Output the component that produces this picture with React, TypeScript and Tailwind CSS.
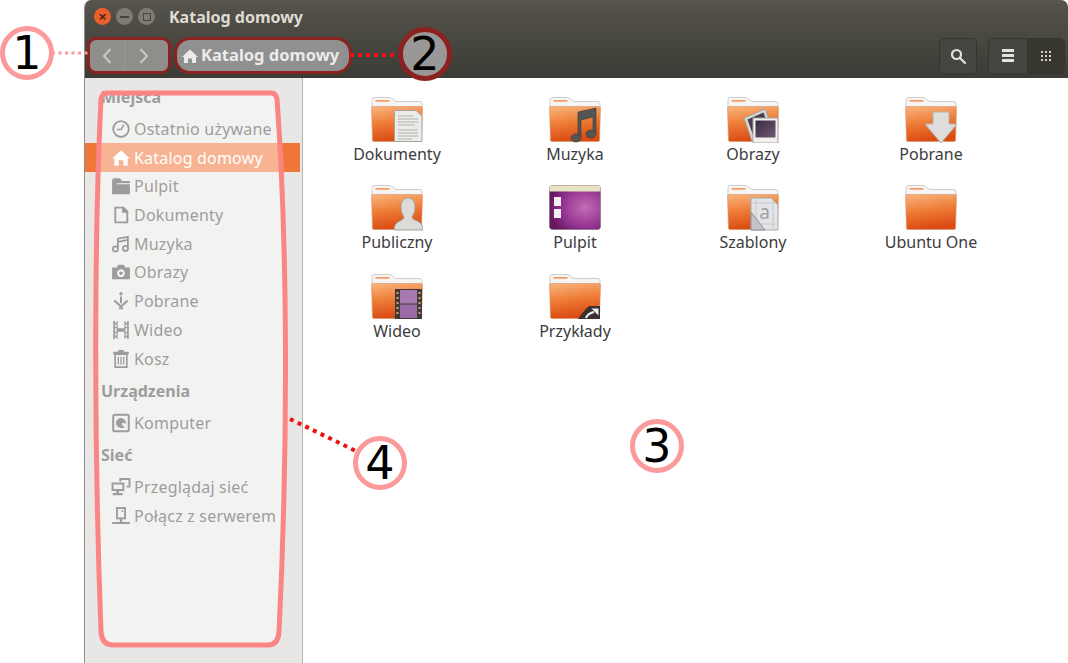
import type { ReactNode } from "react";

const uiFont = "font-['Noto_Sans',sans-serif]";

const FolderDefs = () => (
  <svg width="0" height="0" className="absolute">
    <defs>
      <linearGradient id="folderFront" x1="0" y1="0" x2="0.2" y2="1">
        <stop offset="0" stopColor="#f9b67f" />
        <stop offset="0.5" stopColor="#ee7d38" />
        <stop offset="1" stopColor="#db4c12" />
      </linearGradient>
      <radialGradient id="desktopFill" cx="0.7" cy="0.5" r="0.7">
        <stop offset="0" stopColor="#c56cb4" />
        <stop offset="0.7" stopColor="#8e2f8c" />
        <stop offset="1" stopColor="#66185f" />
      </radialGradient>
      <linearGradient id="photoFill" x1="0" y1="0" x2="1" y2="1">
        <stop offset="0" stopColor="#3d2a45" />
        <stop offset="1" stopColor="#6d5a70" />
      </linearGradient>
    </defs>
  </svg>
);

// Emblems are drawn in the same 52x46 box as the folder
const emblems: Record<string, ReactNode> = {
  docs: (
    <g>
      <path d="M23.500 13.500H45L51 19V44.500H23.500Z" fill="#ecebe8" stroke="#a8a7a3" />
      <path d="M27 19H42M27 22H47M27 25H47M27 28H44M27 33H47M27 36H47M27 39H47M27 42H41" stroke="#a3a29f" strokeWidth="0.8" />
    </g>
  ),
  music: (
    <g fill="#555553" stroke="#3b3b3a" strokeWidth="0.6">
      <path d="M29 15L47 11V36H44V20L32 23V41H29Z" />
      <ellipse cx="27" cy="41" rx="5" ry="4" />
      <ellipse cx="42" cy="37" rx="5" ry="4" />
    </g>
  ),
  photos: (
    <g>
      <path d="M17 21L38 12L45 30L25 44Z" fill="#d9d8d5" stroke="#a5a4a0" />
      <path d="M20.500 22.500L36.500 15.500L41 28L26 38Z" fill="#4b3a50" />
      <rect x="26" y="21" width="25" height="25" fill="#f1f0ee" stroke="#a5a4a0" />
      <rect x="28.500" y="23.500" width="20" height="17" fill="url(#photoFill)" />
    </g>
  ),
  download: (
    <path d="M28 15H44V27H52L36 46L20 27H28Z" fill="#dedddb" stroke="#b5b4b0" />
  ),
  person: (
    <path
      d="M37 13C42 13 44 17 44 22C44 27 42 30 41 32C41 34 44 35 48 37C51 39 52 42 52 45H23C23 42 24 39 27 37C31 35 33 34 33 32C32 30 30 27 30 22C30 17 32 13 37 13Z"
      fill="#dcdbd8"
      stroke="#a5a4a0"
    />
  ),
  templates: (
    <g>
      <path d="M24 13H44L51 20V45H24Z" fill="#e3e4e6" stroke="#aaabae" />
      <path d="M26 18H49M26 39H49M29 14V44M46 14V44" stroke="#bcbdc2" strokeWidth="0.7" />
      <text x="37.500" y="34" textAnchor="middle" fontSize="19" fill="#9fa0a6" fontFamily="Noto Sans, sans-serif">a</text>
      <path d="M24 27L38 45H24Z" fill="#c3c4c8" stroke="#8f9095" />
    </g>
  ),
  video: (
    <g>
      <rect x="24" y="15" width="27" height="30" fill="#3f3a38" />
      <rect x="29" y="16" width="17" height="13.500" fill="#a87bb0" />
      <rect x="29" y="30.500" width="17" height="13.500" fill="#9a6ba4" />
      <path d="M25.500 18h2v2h-2zM25.500 23h2v2h-2zM25.500 28h2v2h-2zM25.500 33h2v2h-2zM25.500 38h2v2h-2zM47.500 18h2v2h-2zM47.500 23h2v2h-2zM47.500 28h2v2h-2zM47.500 33h2v2h-2zM47.500 38h2v2h-2z" fill="#d8a36e" />
    </g>
  ),
  link: (
    <g>
      <path d="M40 32H51V45H29C32 41 35 36 40 32Z" fill="#3a3230" />
      <path d="M37 44C38 41 41 39 45 38" fill="none" stroke="#f1f0ee" strokeWidth="2.200" />
      <path d="M42.500 34.500H49.500V41.500Z" fill="#f1f0ee" />
    </g>
  ),
};

const FolderIcon = ({ emblem }: { emblem?: string }) => (
  <svg width="52" height="46" viewBox="0 0 52 46" className="block">
    <path d="M1 9V2.500Q1 .5 3 .5H19L25 4.500H49Q51 4.500 51 6.500V12H1Z" fill="#f6f5f3" stroke="#cfcecb" />
    <rect x="4.500" y="3" width="14" height="1.700" fill="#f59a63" />
    <path d="M.5 11Q.5 9.500 2 9.500H50Q51.500 9.500 51.500 11L50.500 43Q50.500 44.500 49 44.500H3Q1.500 44.500 1.500 43Z" fill="url(#folderFront)" stroke="#d9916a" strokeWidth="0.6" />
    {emblem && emblems[emblem]}
  </svg>
);

const DesktopIcon = () => (
  <svg width="52" height="46" viewBox="0 0 52 46" className="block">
    <rect x="0.500" y="0.500" width="51" height="44" rx="3" fill="url(#desktopFill)" stroke="#7d6a78" strokeWidth="0.6" />
    <path d="M.5 6.500V3.500Q.5 .5 3.500 .5H48.500Q51.500 .5 51.500 3.500V6.500Z" fill="#e7e4c3" />
    <rect x="5" y="12" width="7" height="9" fill="#f3eef2" />
    <rect x="5" y="24" width="7" height="9" fill="#f3eef2" />
  </svg>
);

// Sidebar glyphs, 18 unit viewBox drawn at 20px
const SideGlyph = ({ children }: { children: ReactNode }) => (
  <svg width="20" height="20" viewBox="0 0 18 18" className="shrink-0" fill="currentColor">
    {children}
  </svg>
);

const sideIcons: Record<string, ReactNode> = {
  clock: (
    <>
      <circle cx="9" cy="9" r="7" fill="none" stroke="currentColor" strokeWidth="1.600" />
      <path d="M5.500 9.500H9.200L11.500 5" fill="none" stroke="currentColor" strokeWidth="1.400" />
    </>
  ),
  home: <path d="M9 2L17 9.500H15V16H11V11H7V16H3V9.500H1Z" />,
  folder: <path d="M1 4Q1 2 3 2H8L10 4.500H17V6.500H5V7.500H17V16.500H1Z" />,
  file: <path d="M3 1.500H11.500L15.500 5.500V16.500H3ZM4.700 3.200V14.800H13.800V7H10V3.200Z" fillRule="evenodd" />,
  music: (
    <g fill="none" stroke="currentColor" strokeWidth="1.600">
      <circle cx="4" cy="13.500" r="2.300" />
      <circle cx="13" cy="13" r="2.300" />
      <path d="M6.200 13.500V4.200L15.200 2.500V13M6.200 7L15.200 5.300" />
    </g>
  ),
  camera: (
    <path d="M1 5H5L6.500 2.500H11.500L13 5H17V15.500H1ZM9 6.500a3.600 3.600 0 1 0 .01 0ZM9 8.500a1.600 1.600 0 1 1-.01 0Z" fillRule="evenodd" />
  ),
  download: (
    <>
      <circle cx="9" cy="2.500" r="1.500" />
      <rect x="8.100" y="5" width="1.800" height="6" />
      <path d="M3 8.500L9 14L15 8.500" fill="none" stroke="currentColor" strokeWidth="1.800" />
      <rect x="7" y="14.800" width="4" height="1.600" />
    </>
  ),
  film: (
    <path d="M2 1H3.500V2.500H5V1H6V7.500H12V1H13V2.500H14.500V1H16V17H14.500V15.500H13V17H12V10.500H6V17H5V15.500H3.500V17H2ZM3.500 4V6H5V4ZM3.500 7.500V10.500H5V7.500ZM3.500 12V14H5V12ZM13 4V6H14.500V4ZM13 7.500V10.500H14.500V7.500ZM13 12V14H14.500V12Z" fillRule="evenodd" />
  ),
  trash: (
    <path d="M2 2.500H6.500V1H11.500V2.500H16V5H15V17H3V5H2ZM4.500 5.500V15.500H13.500V5.500ZM6 7H7.200V14H6ZM8.400 7H9.600V14H8.400ZM10.800 7H12V14H10.800Z" fillRule="evenodd" />
  ),
  computer: (
    <>
      <rect x="2" y="1.500" width="14" height="15" rx="1.500" fill="none" stroke="currentColor" strokeWidth="1.800" />
      <path d="M9 4.500A4.500 4.500 0 0 1 13.300 10L10.500 8.500L9.500 10L12.500 13.500H9A4.500 4.500 0 0 1 9 4.500Z" />
    </>
  ),
  network: (
    <path d="M7.500 1H17.500V9.500H14V7.800H15.800V2.700H9.200V4H7.500ZM.5 5H12V12.500H7.200V14.300H10.500V16.500H1.500V14.300H4.800V12.500H.5ZM2.200 6.700V10.800H10.300V6.700Z" fillRule="evenodd" />
  ),
  server: (
    <path d="M4.500 1H13.500V12H10V14.500H17V16.300H1V14.500H8V12H4.500ZM6.200 2.700V10.300H11.800V2.700ZM9.500 3.800H11V5.300H9.500Z" fillRule="evenodd" />
  ),
};

const SideHeading = ({ label }: { label: string }) => (
  <div className="flex h-[35.7px] items-center pl-[16px] text-[16px] font-bold text-[#4c4c4c]">
    {label}
  </div>
);

const SideRow = ({ icon, label, active }: { icon: string; label: string; active?: boolean }) => (
  <div
    className={`flex h-[28.7px] items-center gap-[3px] pl-[26px] text-[16px] tracking-[0.2px] ${
      active ? "bg-[#f0763a] text-white" : "text-[#4c4c4c]"
    }`}
  >
    <SideGlyph>{sideIcons[icon]}</SideGlyph>
    <span className="whitespace-nowrap">{label}</span>
  </div>
);

const places = [
  { icon: "clock", label: "Ostatnio używane" },
  { icon: "home", label: "Katalog domowy", active: true },
  { icon: "folder", label: "Pulpit" },
  { icon: "file", label: "Dokumenty" },
  { icon: "music", label: "Muzyka" },
  { icon: "camera", label: "Obrazy" },
  { icon: "download", label: "Pobrane" },
  { icon: "film", label: "Wideo" },
  { icon: "trash", label: "Kosz" },
];

const files = [
  { label: "Dokumenty", emblem: "docs" },
  { label: "Muzyka", emblem: "music" },
  { label: "Obrazy", emblem: "photos" },
  { label: "Pobrane", emblem: "download" },
  { label: "Publiczny", emblem: "person" },
  { label: "Pulpit", desktop: true },
  { label: "Szablony", emblem: "templates" },
  { label: "Ubuntu One" },
  { label: "Wideo", emblem: "video" },
  { label: "Przykłady", emblem: "link" },
];

const Callout = ({ n, className }: { n: number; className: string }) => (
  <div
    className={`absolute flex h-[54px] w-[54px] items-center justify-center rounded-full border-[5px] font-['DejaVu_Sans',sans-serif] text-[46px] leading-none text-black ${className}`}
  >
    {n}
  </div>
);

export default function App() {
  return (
    <div className={`relative flex h-[663px] w-[1068px] overflow-hidden bg-white pl-[84px] ${uiFont}`}>
      <FolderDefs />
      <div className="flex h-full w-full flex-col overflow-hidden rounded-t-[7px] border-l border-[#8f8e8b]">
        {/* title bar */}
        <div className="flex h-[33px] shrink-0 items-center bg-gradient-to-b from-[#56544c] to-[#4a4942] pl-[9px]">
          <div className="flex h-[17px] w-[17px] items-center justify-center rounded-full bg-[#e9602c] text-[15px] font-bold leading-none text-[#5c2410]">
            ×
          </div>
          <div className="ml-[5px] flex h-[17px] w-[17px] items-center justify-center rounded-full bg-[#7d7b72]">
            <div className="h-[2px] w-[9px] bg-[#45443e]" />
          </div>
          <div className="ml-[5px] flex h-[17px] w-[17px] items-center justify-center rounded-full bg-[#7d7b72]">
            <div className="h-[8px] w-[8px] border border-[#45443e]" />
          </div>
          <div className="ml-[14px] text-[16px] font-bold text-[#dfdbd2]">Katalog domowy</div>
        </div>

        {/* toolbar */}
        <div className="flex h-[45px] shrink-0 items-center bg-gradient-to-b from-[#4a4942] to-[#3c3b35] pl-[2px] pr-[3px]">
          <div className="flex h-[37px] w-[84px] rounded-[9px] border-[3px] border-[#8c2220] bg-[#8f8e8b]">
            <div className="flex w-[35px] items-center justify-center border-r border-[#9a9996]">
              <svg width="12" height="18" viewBox="0 0 12 18" fill="none" stroke="#c9c8c5" strokeWidth="2">
                <path d="M9.500 2L3 9L9.500 16" />
              </svg>
            </div>
            <div className="flex flex-1 items-center justify-center pr-[5px]">
              <svg width="12" height="18" viewBox="0 0 12 18" fill="none" stroke="#c9c8c5" strokeWidth="2">
                <path d="M2.500 2L9 9L2.500 16" />
              </svg>
            </div>
          </div>
          <div className="ml-[3px] flex h-[37px] w-[178px] items-center gap-[2px] rounded-[16px] border-[3px] border-[#8c2220] bg-[#919090] pl-[4px] text-[16.500px] font-bold text-[#ecebe8]">
            <svg width="18" height="18" viewBox="0 0 18 18" fill="#ecebe8" className="shrink-0">
              <path d="M9 2.500L17 10H15V16H11V11.500H7V16H3V10H1Z" />
            </svg>
            <span className="whitespace-nowrap">Katalog domowy</span>
          </div>
          <div className="ml-auto flex h-[36px] w-[38px] items-center justify-center rounded-[5px] border border-[#35342f] bg-[#46453f]">
            <svg width="18" height="18" viewBox="0 0 18 18" fill="none" stroke="#e4e2dc" strokeWidth="2.200">
              <circle cx="7.500" cy="7.500" r="4.500" />
              <path d="M11 11L16 16" strokeLinecap="round" />
            </svg>
          </div>
          <div className="ml-[11px] flex h-[36px] w-[77px] overflow-hidden rounded-[5px] border border-[#35342f]">
            <div className="flex w-[38px] flex-col items-center justify-center gap-[2.500px] bg-[#46453f]">
              <div className="h-[2.500px] w-[12px] bg-[#e4e2dc]" />
              <div className="h-[2.500px] w-[12px] bg-[#e4e2dc]" />
              <div className="h-[2.500px] w-[12px] bg-[#e4e2dc]" />
            </div>
            <div className="flex flex-1 items-center justify-center bg-[#37362f]">
              <div className="grid grid-cols-3 gap-[2px]">
                {[0, 1, 2, 3, 4, 5, 6, 7, 8].map((d) => (
                  <div key={d} className="h-[2px] w-[2px] bg-[#d5d3cc]" />
                ))}
              </div>
            </div>
          </div>
        </div>

        <div className="flex min-h-0 flex-1">
          {/* sidebar */}
          <div className="w-[218px] shrink-0 border-r border-[#b5b4b1] bg-[#e8e7e6] pr-[2px] pt-px">
            <SideHeading label="Miejsca" />
            {places.map((p) => (
              <SideRow key={p.label} icon={p.icon} label={p.label} active={p.active} />
            ))}
            <SideHeading label="Urządzenia" />
            <SideRow icon="computer" label="Komputer" />
            <SideHeading label="Sieć" />
            <SideRow icon="network" label="Przeglądaj sieć" />
            <SideRow icon="server" label="Połącz z serwerem" />
          </div>

          {/* icon grid */}
          <div className="grid flex-1 grid-cols-[repeat(4,178px)] content-start pl-[5px] pt-[19px]">
            {files.map((f) => (
              <div key={f.label} className="flex h-[88.300px] flex-col items-center">
                {f.desktop ? <DesktopIcon /> : <FolderIcon emblem={f.emblem} />}
                <div className="mt-[1px] whitespace-nowrap text-[16px] leading-[20px] text-[#3c3c3c]">{f.label}</div>
              </div>
            ))}
          </div>
        </div>
      </div>

      {/* annotation layer */}
      <svg width="1068" height="663" className="pointer-events-none absolute left-0 top-0">
        <path
          d="M107 93Q102 93 101 99C95 220 93 420 101 632Q102 645 113 645H268Q278 645 279 632C288 450 288 250 277 99Q276 93 271 93Z"
          fill="#ffffff"
          fillOpacity="0.45"
          stroke="#fb8585"
          strokeWidth="5"
        />
        <path d="M52 53H88" stroke="#fb9a9a" strokeWidth="3" strokeDasharray="3 3.500" />
        <path d="M350 55H400" stroke="#ee1111" strokeWidth="4" strokeDasharray="4 4" />
        <path d="M290 419L358 452" stroke="#ee1111" strokeWidth="4" strokeDasharray="4 4.500" />
      </svg>
      <Callout n={1} className="left-0 top-[26px] border-[#fb9a9a] bg-white" />
      <Callout n={2} className="left-[398px] top-[27px] border-[#8c2220] bg-[#999897]" />
      <Callout n={3} className="left-[630px] top-[419px] border-[#fb9a9a] bg-white" />
      <Callout n={4} className="left-[353px] top-[436px] border-[#fb9a9a] bg-white" />
    </div>
  );
}
